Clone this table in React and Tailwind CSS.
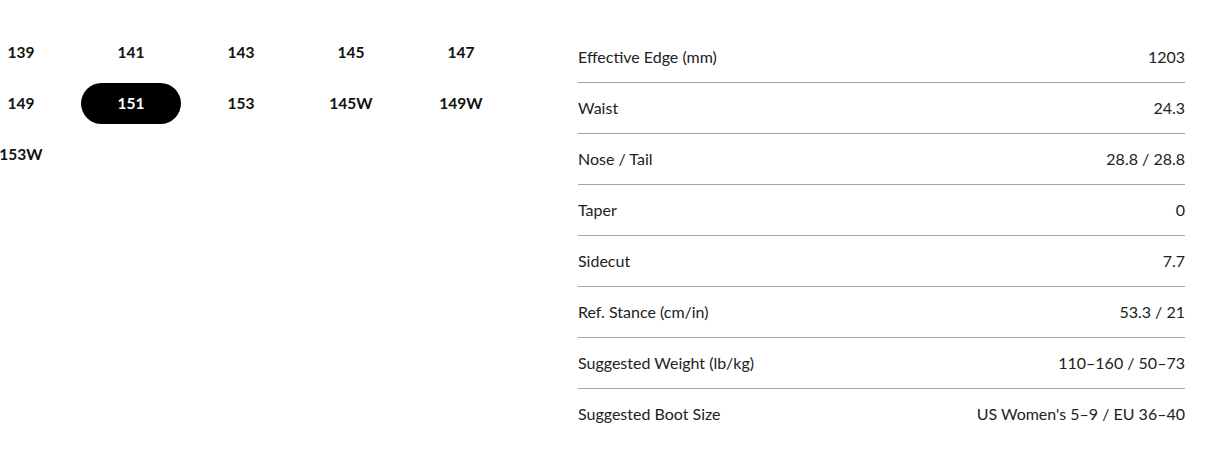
import React from "react";

const sizes = ["139", "141", "143", "145", "147", "149", "151", "153", "145W", "149W", "153W"];
const specs = [
  ["Effective Edge (mm)", "1203"],
  ["Waist", "24.3"],
  ["Nose / Tail", "28.8 / 28.8"],
  ["Taper", "0"],
  ["Sidecut", "7.7"],
  ["Ref. Stance (cm/in)", "53.3 / 21"],
  ["Suggested Weight (lb/kg)", "110–160 / 50–73"],
  ["Suggested Boot Size", "US Women's 5–9 / EU 36–40"],
];

export default function App() {
  return (
    <div className="w-[1230px] h-[456px] bg-white overflow-hidden text-[#111]" style={{ fontFamily: "Lato, 'Liberation Sans', sans-serif" }}>
      <div className="flex pt-[32px]">
        <div className="ml-[-29px] grid grid-cols-[repeat(5,100px)] gap-[10px] content-start h-fit">
          {sizes.map((s) => (
            <div
              key={s}
              className={
                "h-[41px] flex items-center justify-center rounded-full text-[15.5px] font-bold " +
                (s === "151" ? "bg-black text-white" : "")
              }
            >
              {s}
            </div>
          ))}
        </div>
        <div className="ml-[67px] w-[607px] flex flex-col">
          {specs.map(([k, v], i) => (
            <div
              key={k}
              className={
                "h-[51px] flex items-center justify-between text-[16px] text-[#222] pb-px " +
                (i < specs.length - 1 ? "border-b border-[#a3a3a3]" : "")
              }
            >
              <span>{k}</span>
              <span>{v}</span>
            </div>
          ))}
        </div>
      </div>
    </div>
  );
}
